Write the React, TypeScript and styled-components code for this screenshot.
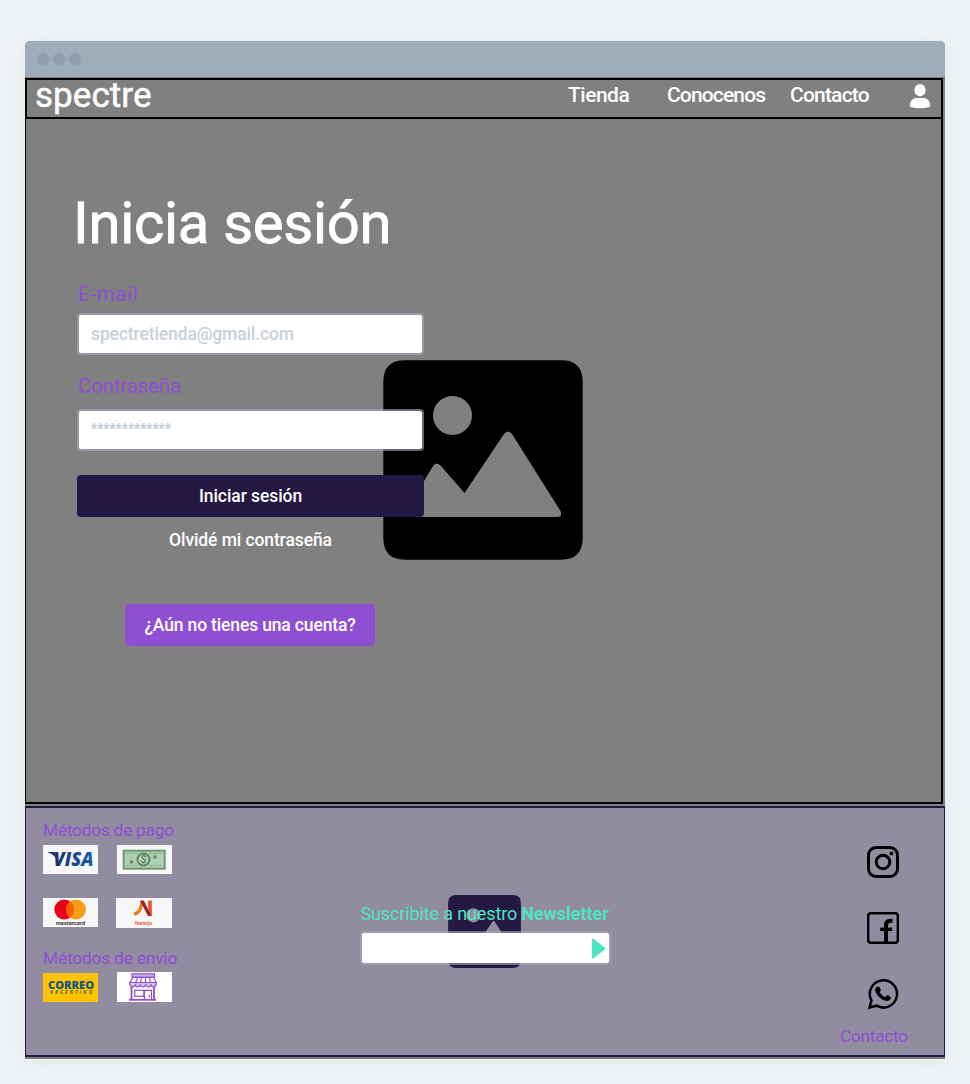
import React from "react";
import styled, { createGlobalStyle } from "styled-components";

const GlobalStyle = createGlobalStyle`
  * { box-sizing: border-box; }
  body { margin: 0; background: #eff3f6; font-family: Roboto, "Liberation Sans", sans-serif; }
`;

const ink = "#241943";
const purple = "#8f4fd3";
const teal = "#50e3c2";

const Page = styled.div`
  height: 1084px;
  padding: 41px 25px 0;
`;

const BrowserWindow = styled.div`
  width: 920px;
  height: 1018px;
  display: flex;
  flex-direction: column;
  background: #808080;
  border-radius: 5px 5px 0 0;
  overflow: hidden;
  box-shadow: 0 2px 16px rgba(60, 80, 100, 0.07);
`;

const TitleBar = styled.div`
  height: 36px;
  flex: none;
  display: flex;
  align-items: center;
  gap: 4px;
  padding-left: 12px;
  background: #9eadb9;
`;

const Dot = styled.span`
  width: 12px;
  height: 12px;
  border-radius: 50%;
  background: #8e9dac;
`;

const Screen = styled.main`
  width: 918px;
  height: 726px;
  flex: none;
  margin: 1px 0 2px;
  border: 2px solid #000;
  border-left-width: 1px;
`;

const Nav = styled.nav`
  height: 39px;
  display: flex;
  align-items: center;
  padding: 0 11px 5px 8px;
  border-left: 1px solid #000;
  border-bottom: 2px solid #000;
  color: #fff;
`;

const Text = styled.span<{ $size: number; $track?: number; $weight?: number; $color?: string }>`
  font-size: ${(p) => p.$size}px;
  letter-spacing: ${(p) => p.$track ?? 0}px;
  font-weight: ${(p) => p.$weight ?? 400};
  color: ${(p) => p.$color ?? "#fff"};
  line-height: 20px;
  white-space: nowrap;
`;

const Brand = styled(Text)`
  margin-right: auto;
  -webkit-text-stroke: 0.5px #fff;
`;

const NavLink = styled(Text)<{ $width: number; $gap: number }>`
  width: ${(p) => p.$width}px;
  margin: 0 ${(p) => p.$gap}px 2px 0;
`;

const Hero = styled.section`
  position: relative;
  height: 683px;
  padding: 74px 0 0 51px;
`;

const HeroPicture = styled.div`
  position: absolute;
  left: 357px;
  top: 241px;
  width: 200px;
  height: 200px;
`;

const Form = styled.form`
  position: relative;
  width: 347px;
  display: flex;
  flex-direction: column;
`;

const Title = styled.h1`
  margin: 0 0 31px -4px;
  font-size: 58px;
  font-weight: 400;
  line-height: 60px;
  letter-spacing: -0.3px;
  color: #fff;
  -webkit-text-stroke: 0.8px #fff;
  white-space: nowrap;
`;

const FieldLabel = styled(Text)<{ $gap: number }>`
  margin: 0 0 ${(p) => p.$gap}px 1px;
`;

const Field = styled.div<{ $gap: number }>`
  height: 42px;
  margin-bottom: ${(p) => p.$gap}px;
  padding: 0 12px;
  display: flex;
  align-items: center;
  background: #fff;
  background-clip: padding-box;
  border: 2px solid rgba(158, 173, 185, 0.62);
  border-radius: 4px;
`;

const Mask = styled(Text)`
  font-family: "Liberation Sans", sans-serif;
`;

const Button = styled.button<{ $bg: string; $width: number; $indent?: number }>`
  width: ${(p) => p.$width}px;
  height: 42px;
  margin-left: ${(p) => p.$indent ?? 0}px;
  padding: 0;
  border: 0;
  border-radius: 4px;
  background: ${(p) => p.$bg};
  font-family: inherit;
`;

const Forgot = styled(Text)`
  align-self: center;
  margin: 13px 0 54px;
`;

const Footer = styled.footer`
  height: 251px;
  flex: none;
  display: flex;
  justify-content: space-between;
  background: #928ca1;
  border: solid ${ink};
  border-width: 2px 1px;
`;

const Methods = styled.div`
  width: 250px;
  padding: 12px 0 0 17px;
  display: flex;
  flex-direction: column;
`;

const ShippingTitle = styled(Text)`
  margin-top: 20px;
`;

const LogoRow = styled.div<{ $top: number; $h: number; $gap?: number }>`
  height: ${(p) => p.$h}px;
  margin-top: ${(p) => p.$top}px;
  display: flex;
  align-items: flex-start;
  gap: ${(p) => p.$gap ?? 19}px;
`;

const LogoTile = styled.div<{ $bg?: string; $w?: number; $h?: number; $drop?: number }>`
  width: ${(p) => p.$w ?? 55}px;
  height: ${(p) => p.$h ?? 29}px;
  margin-top: ${(p) => p.$drop ?? 0}px;
  background: ${(p) => p.$bg ?? "#f7f7f7"};
  svg { display: block; }
`;

const Newsletter = styled.div`
  position: relative;
  width: 251px;
  padding-top: 96px;
`;

const NewsletterPicture = styled.div`
  position: absolute;
  left: 88px;
  top: 87px;
  width: 73px;
  height: 73px;
`;

const NewsletterText = styled.div`
  position: relative;
  height: 20px;
  display: flex;
  gap: 4px;
  margin: 0 0 7px 1px;
`;

const NewsletterField = styled(Field)`
  position: relative;
  height: 34px;
  padding: 0 3px 0 0;
  justify-content: flex-end;
`;

const Social = styled.div`
  width: 250px;
  padding: 38px 35px 0 0;
  display: flex;
  flex-direction: column;
  align-items: flex-end;
  gap: 34px;
  svg { margin-right: 10px; display: block; }
`;

const SocialCaption = styled(Text)`
  width: 69px;
  margin-top: -18px;
`;

function Picture({ color }: { color: string }) {
  return (
    <svg width="100%" height="100%" viewBox="0 0 200 200" display="block">
      <path
        fill={color}
        fillRule="evenodd"
        d="M22 0.300H178Q199.700 0.300 199.700 22V178Q199.700 199.700 178 199.700H22Q0.300 199.700 0.300 178V22Q0.300 0.300 22 0.300Z
           M69.5 36A19.5 19.5 0 1 0 69.5 75A19.5 19.5 0 1 0 69.5 36Z
           M26 157Q20 157 23 151L50 106Q53.500 101 58 106L81.500 133L121 74Q125 69 129 74L177.500 151Q180 157 174 157Z"
      />
    </svg>
  );
}

function Visa() {
  return (
    <svg width="55" height="29" viewBox="0 0 55 29">
      <defs>
        <linearGradient id="visa" x1="0" x2="1">
          <stop offset="0" stopColor="#1b2d69" />
          <stop offset="1" stopColor="#1560a8" />
        </linearGradient>
      </defs>
      <path d="M5 7H10.500Q12 7 12.500 8.500L14 15Q11 9 5 7.500Z" fill="#1b2d69" />
      <text x="10.500" y="21" fontFamily="Open Sans" fontSize="19.500" fontWeight="800" fontStyle="italic" fill="url(#visa)" textLength="40" lengthAdjust="spacingAndGlyphs">VISA</text>
    </svg>
  );
}

function Cash() {
  return (
    <svg width="55" height="29" viewBox="0 0 55 29">
      <rect x="6.700" y="5.700" width="41" height="18" fill="#b0ceb4" stroke="#6d9873" strokeWidth="2" />
      <path d="M9 8.500H22M32 8.500H45M9 20.500H21M32 20.500H45" stroke="#8fb394" strokeWidth="1" />
      <circle cx="26.500" cy="14.500" r="6" fill="#b5d2b9" stroke="#5c8963" strokeWidth="2" />
      <circle cx="14.500" cy="17" r="1.700" fill="#5c8963" />
      <circle cx="38" cy="12" r="1.700" fill="#5c8963" />
      <text x="26.500" y="18.200" textAnchor="middle" fontFamily="Roboto" fontSize="10" fontWeight="500" fill="#4f7c57">$</text>
    </svg>
  );
}

function Mastercard() {
  return (
    <svg width="55" height="29" viewBox="0 0 55 29">
      <circle cx="21.300" cy="11.500" r="10" fill="#eb001b" />
      <circle cx="33" cy="11.500" r="10" fill="#f79e1b" />
      <path d="M27.150 3.400A10 10 0 0 1 27.150 19.600A10 10 0 0 1 27.150 3.400Z" fill="#ff5f00" />
      <text x="13" y="27" fontFamily="Roboto" fontSize="5.500" fontWeight="700" fill="#333" textLength="29">mastercard</text>
    </svg>
  );
}

function Naranja() {
  return (
    <svg width="56" height="30" viewBox="0 0 56 30">
      <path d="M18 15.800Q24.500 16 26 3.500" fill="none" stroke="#f07a24" strokeWidth="3.200" />
      <path d="M34 2.500V18" stroke="#ee5325" strokeWidth="3.600" />
      <path d="M24 2.500H27.800L35.500 18H32Z" fill="#9c2429" />
      <text x="19" y="27" fontFamily="Roboto" fontSize="5" fontWeight="700" fill="#ef6a4a" textLength="17">Naranja</text>
    </svg>
  );
}

function Correo() {
  return (
    <svg width="55" height="29" viewBox="0 0 55 29">
      <text x="5" y="16" fontFamily="Open Sans" fontSize="10.500" fontWeight="800" fill="#14557f" textLength="46" lengthAdjust="spacingAndGlyphs">CORREO</text>
      <text x="7" y="20.600" fontFamily="Open Sans" fontSize="4.600" fontWeight="700" fontStyle="italic" fill="#3f6b58" textLength="42">ARGENTINO</text>
    </svg>
  );
}

function Store() {
  return (
    <svg width="55" height="30" viewBox="0 0 55 30" fill="none" stroke={purple} strokeWidth="1.200">
      <rect x="15" y="1.800" width="22.500" height="3.400" fill="#cdb0ea" />
      <path d="M16 5.500L12.800 10.500H39.200L36.500 5.500Z" fill="#fff" />
      <path d="M21 5.500L18.500 10.500M24.500 5.500L23.500 10.500M28.500 5.500V10.500M32.500 5.500L33.500 10.500" />
      <path
        d="M12.800 10.500V12.300A2.650 2.500 0 0 0 18.100 12.300A2.650 2.500 0 0 0 23.400 12.300A2.650 2.500 0 0 0 28.700 12.300A2.650 2.500 0 0 0 34 12.300A2.600 2.500 0 0 0 39.200 12.300V10.500Z"
        fill="#d9c2f0"
      />
      <path d="M14.500 15V27.500M37 15V27.500" strokeWidth="1.800" />
      <path d="M12 27.800H39" strokeWidth="1.800" />
      <rect x="17.800" y="18.300" width="9" height="6" />
      <path d="M27.500 27.500V18.300H34.500V27.500M32.300 23V25.500" />
    </svg>
  );
}

export default function App() {
  return (
    <Page>
      <GlobalStyle />
      <BrowserWindow>
        <TitleBar>
          <Dot />
          <Dot />
          <Dot />
        </TitleBar>
        <Screen>
          <Nav>
            <Brand $size={35} $track={0.05}>spectre</Brand>
            <NavLink $size={21} $weight={500} $track={-0.5} $width={61} $gap={38}>Tienda</NavLink>
            <NavLink $size={21} $weight={500} $track={-0.85} $width={98} $gap={25}>Conocenos</NavLink>
            <NavLink $size={21} $weight={500} $track={-0.8} $width={79} $gap={40}>Contacto</NavLink>
            <svg width="21" height="25" viewBox="-0.500 0 21 25" fill="#fff">
              <ellipse cx="10.500" cy="6.200" rx="5.600" ry="6.200" />
              <path d="M0.500 22C0 16.500 4 14 7 14H14C17 14 21 16.500 20.500 22Q20.500 23 19 23.300Q10.500 25 2 23.300Q0.500 23 0.500 22Z" />
            </svg>
          </Nav>
          <Hero>
            <HeroPicture>
              <Picture color="#000" />
            </HeroPicture>
            <Form>
              <Title>Inicia sesión</Title>
              <FieldLabel $size={20.5} $track={0.7} $color={purple} $gap={9}>E-mail</FieldLabel>
              <Field $gap={21}>
                <Text $size={17.5} $weight={500} $track={-0.12} $color="#c7d1da">spectretienda@gmail.com</Text>
              </Field>
              <FieldLabel $size={20.5} $track={-0.15} $color={purple} $gap={13}>Contraseña</FieldLabel>
              <Field $gap={24}>
                <Mask $size={15.8} $weight={700} $color="#c7d1da">*************</Mask>
              </Field>
              <Button type="button" $bg={ink} $width={347}>
                <Text $size={17.5} $weight={500} $track={-0.08}>Iniciar sesión</Text>
              </Button>
              <Forgot $size={17.5} $weight={500} $track={-0.1}>Olvidé mi contraseña</Forgot>
              <Button type="button" $bg={purple} $width={250} $indent={48}>
                <Text $size={17.5} $weight={500} $track={-0.15}>¿Aún no tienes una cuenta?</Text>
              </Button>
            </Form>
          </Hero>
        </Screen>
        <Footer>
          <Methods>
            <Text $size={17.4} $track={-0.28} $color={purple}>Métodos de pago</Text>
            <LogoRow $top={5} $h={29}>
              <LogoTile><Visa /></LogoTile>
              <LogoTile><Cash /></LogoTile>
            </LogoRow>
            <LogoRow $top={24} $h={30} $gap={18}>
              <LogoTile><Mastercard /></LogoTile>
              <LogoTile $w={56} $h={30}><Naranja /></LogoTile>
            </LogoRow>
            <ShippingTitle $size={17.4} $track={-0.22} $color={purple}>Métodos de envio</ShippingTitle>
            <LogoRow $top={4} $h={30}>
              <LogoTile $bg="#ffc400" $drop={1}><Correo /></LogoTile>
              <LogoTile $bg="#fff" $h={30}><Store /></LogoTile>
            </LogoRow>
          </Methods>
          <Newsletter>
            <NewsletterPicture>
              <Picture color={ink} />
            </NewsletterPicture>
            <NewsletterText>
              <Text $size={18} $track={-0.13} $color={teal}>Suscribite a nuestro</Text>
              <Text $size={18} $weight={700} $track={-0.02} $color={teal}>Newsletter</Text>
            </NewsletterText>
            <NewsletterField $gap={0}>
              <svg width="14" height="21" viewBox="0 0 14 21">
                <path d="M0 1.500Q0 0 1.500 0.800L13.300 9.800Q14 10.500 13.300 11.200L1.500 20.200Q0 21 0 19.500Z" fill={teal} />
              </svg>
            </NewsletterField>
          </Newsletter>
          <Social>
            <svg width="32" height="32" viewBox="0 0 32 32" fill="none" stroke="#000" strokeWidth="3">
              <rect x="1.500" y="1.500" width="29" height="29" rx="7.500" />
              <circle cx="16" cy="16" r="6.800" />
              <circle cx="24.500" cy="7.500" r="1.900" fill="#000" stroke="none" />
            </svg>
            <svg width="32" height="32" viewBox="0 0 32 32" fill="none" stroke="#000">
              <rect x="1.200" y="1.200" width="29.600" height="29.600" rx="2.500" strokeWidth="2.400" />
              <path d="M19 31V13.500Q19 8.800 23 8.800H25.500" strokeWidth="4" />
              <path d="M13.200 17.300H25.200" strokeWidth="3.400" />
            </svg>
            <svg width="32" height="32" viewBox="0 0 32 32">
              <path d="M2.500 29.500L4.500 22.500A13.600 13.600 0 1 1 9.600 27.700Z" fill="none" stroke="#000" strokeWidth="2.500" />
              <path d="M9.500 9Q11.500 8 12.800 9.500L13.800 12Q14 13 12.800 14.200Q14.500 17.500 18 19.200L19.500 17.600Q20 17 21 17.500L23.500 18.800Q24.300 19.300 23.500 21Q22 23.500 18.500 22.800Q11.500 20.500 8.600 14Q7.500 10.500 9.500 9Z" />
            </svg>
            <SocialCaption $size={17.4} $track={-0.33} $color={purple}>Contacto</SocialCaption>
          </Social>
        </Footer>
      </BrowserWindow>
    </Page>
  );
}
